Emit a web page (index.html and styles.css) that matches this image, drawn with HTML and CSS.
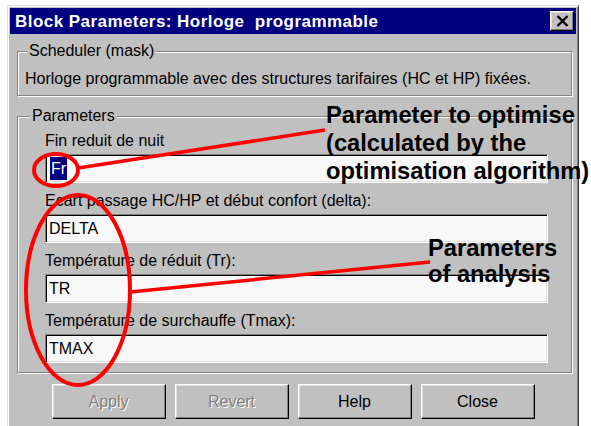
FILE: index.html
```html
<!DOCTYPE html>
<html lang="fr">
<head>
<meta charset="utf-8">
<title>Block Parameters: Horloge programmable</title>
<link rel="stylesheet" href="styles.css">
</head>
<body>
<div class="window">
  <div class="titlebar">
    <span class="title">Block Parameters: Horloge&nbsp; programmable</span>
    <button class="close" type="button" aria-label="Close">
      <svg width="13" height="12" viewBox="0 0 13 12"><path d="M1.5 1 L11.5 11 M11.5 1 L1.5 11" stroke="#000" stroke-width="2.4"/></svg>
    </button>
  </div>
  <div class="content">
    <fieldset class="group scheduler">
      <legend>Scheduler (mask)</legend>
      <p class="desc">Horloge programmable avec des structures tarifaires (HC et HP) fixées.</p>
    </fieldset>
    <fieldset class="group params">
      <legend>Parameters</legend>
      <div class="field">
        <label>Fin reduit de nuit</label>
        <div class="edit"><span class="sel">Fr</span></div>
      </div>
      <div class="field">
        <label>Ecart passage HC/HP et début confort (delta):</label>
        <div class="edit">DELTA</div>
      </div>
      <div class="field">
        <label>Température de réduit (Tr):</label>
        <div class="edit">TR</div>
      </div>
      <div class="field">
        <label>Température de surchauffe (Tmax):</label>
        <div class="edit">TMAX</div>
      </div>
    </fieldset>
    <div class="buttons">
      <button class="btn" type="button" disabled>Apply</button>
      <button class="btn" type="button" disabled>Revert</button>
      <button class="btn" type="button">Help</button>
      <button class="btn" type="button">Close</button>
    </div>
  </div>
</div>

<!-- red callout marks drawn over the dialog -->
<svg class="marks" width="591" height="426" viewBox="0 0 591 426">
  <ellipse cx="56" cy="170" rx="22" ry="16" fill="none" stroke="#ff0000" stroke-width="4"/>
  <line x1="78" y1="168" x2="325" y2="130" stroke="#ff0000" stroke-width="3.5"/>
  <ellipse cx="78" cy="290" rx="52" ry="95" fill="none" stroke="#ff0000" stroke-width="4"/>
  <line x1="130" y1="292" x2="430" y2="262" stroke="#ff0000" stroke-width="3.5"/>
</svg>
<div class="note note-opt">Parameter to optimise<br>(calculated by the<br>optimisation algorithm)</div>
<div class="note note-ana">Parameters<br>of analysis</div>
</body>
</html>
```

FILE: styles.css
```css
html, body {
  margin: 0;
  padding: 0;
}

body {
  position: relative;
  width: 591px;
  height: 426px;
  overflow: hidden;
  background: #ffffff;
  font-family: "Liberation Sans", Arial, sans-serif;
}

/* dialog frame */
.window {
  box-sizing: border-box;
  width: 572px;
  height: 440px;
  margin: 5px 0 0 7px;
  padding: 2px;
  background: #c0c0c0;
  border: 1px solid;
  border-color: #dfdfdf #404040 #404040 #dfdfdf;
  box-shadow: inset 1px 1px 0 #ffffff, inset -1px -1px 0 #808080;
}

.titlebar {
  height: 26px;
  background: #000080;
  display: flex;
  align-items: center;
  justify-content: space-between;
  padding: 0 2px 0 5px;
}

.title {
  color: #ffffff;
  font-weight: bold;
  font-size: 17px;
  letter-spacing: 0.45px;
  white-space: pre;
  padding-top: 2px;
}

.close {
  box-sizing: border-box;
  width: 24px;
  height: 20px;
  padding: 0;
  display: flex;
  align-items: center;
  justify-content: center;
  background: #c0c0c0;
  border: 1px solid;
  border-color: #ffffff #000000 #000000 #ffffff;
  box-shadow: inset -1px -1px 0 #808080, inset 1px 1px 0 #dfdfdf;
}

.content {
  font-size: 16px;
  color: #000000;
}

/* etched group boxes */
.group {
  margin: 0 4px 0 7px;
  border: 1px solid #808080;
  box-shadow: 1px 1px 0 #ffffff, inset 1px 1px 0 #ffffff;
  min-width: 0;
}

.group legend {
  line-height: 18px;
  padding: 0 2px;
  background: #c0c0c0;
}

.scheduler {
  margin-top: 8px;
  padding: 10px 7px 7px 7px;
}

.scheduler legend {
  margin-left: 2px;
}

.desc {
  margin: 0;
  line-height: 18px;
  white-space: nowrap;
}

.params {
  margin-top: 11px;
  padding: 7px 23px 9px 27px;
  display: flex;
  flex-direction: column;
  gap: 9px;
}

.params legend {
  margin-left: -15px;
}

.field {
  display: flex;
  flex-direction: column;
  gap: 4px;
}

.field label {
  line-height: 18px;
}

/* sunken edit fields */
.edit {
  box-sizing: border-box;
  height: 29px;
  padding: 0 3px;
  display: flex;
  align-items: center;
  background: #f8f8f8;
  border: 1px solid;
  border-color: #808080 #ffffff #ffffff #808080;
  box-shadow: inset 1px 1px 0 #000000, inset -1px -1px 0 #dfdfdf;
}

.sel {
  background: #000080;
  color: #ffffff;
  line-height: 23px;
  padding: 0 1px;
  margin-left: 1px;
}

.buttons {
  margin-top: 11px;
  display: flex;
  justify-content: center;
  gap: 9px;
}

.btn {
  box-sizing: border-box;
  width: 114px;
  height: 35px;
  font-family: inherit;
  font-size: 16px;
  color: #000000;
  background: #c0c0c0;
  border: 1px solid;
  border-color: #ffffff #000000 #000000 #ffffff;
  box-shadow: inset -1px -1px 0 #808080, inset 1px 1px 0 #dfdfdf;
  padding: 0;
}

.btn:disabled {
  color: #808080;
  text-shadow: 1px 1px 0 #ffffff;
}

/* callouts layered over the dialog */
.marks {
  position: absolute;
  left: 0;
  top: 0;
  pointer-events: none;
}

.note {
  position: absolute;
  font-family: "Liberation Sans", Arial, sans-serif;
  font-weight: bold;
  font-size: 23.7px;
  color: #000000;
  white-space: nowrap;
}

.note-opt {
  left: 326px;
  top: 101px;
  line-height: 28px;
}

.note-ana {
  left: 428px;
  top: 235px;
  line-height: 26px;
}
```
